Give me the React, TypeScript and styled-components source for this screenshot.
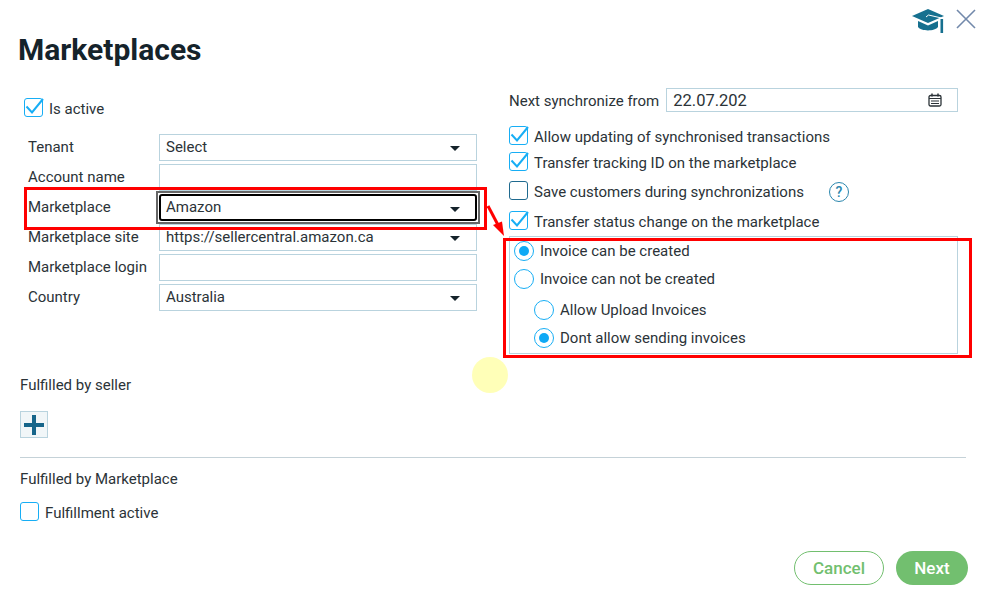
import React from "react";
import styled, { createGlobalStyle } from "styled-components";

const GlobalStyle = createGlobalStyle`
    html, body {
        margin: 0;
        padding: 0;
        background: #ffffff;
    }
    * {
        box-sizing: border-box;
    }
`

const formRows = [
    { label: "Tenant", value: "Select", select: true },
    { label: "Account name", value: "", select: false },
    { label: "Marketplace", value: "Amazon", select: true, focused: true },
    { label: "Marketplace site", value: "https://sellercentral.amazon.ca", select: true },
    { label: "Marketplace login", value: "", select: false },
    { label: "Country", value: "Australia", select: true },
]

const syncOptions = [
    { label: "Allow updating of synchronised transactions", checked: true, height: 26 },
    { label: "Transfer tracking ID on the marketplace", checked: true, height: 29 },
    { label: "Save customers during synchronizations", checked: false, height: 30, help: true },
    { label: "Transfer status change on the marketplace", checked: true, height: 25 },
]

const Tick: React.FC = () => (
    <TickIcon width="22" height="20" viewBox="0 0 22 20">
        <path d="M3.5 9.5 L9 15.5 L20 2" fill="none" stroke="#17aef5" strokeWidth="2" />
    </TickIcon>
)

export default function App() {
    return (
        <Page>
            <GlobalStyle />
            <TopBar>
                <svg width="33" height="25" viewBox="0 0 33 25">
                    <path d="M16 0 L32 7 L16 14 L0 7 Z" fill="#16708f" />
                    <path d="M6 12 L16 16.5 L26 12 V18 C23 22.5 9 22.5 6 18 Z" fill="#16708f" />
                    <path d="M14 8 L16.5 6 L29.5 9 V15" fill="none" stroke="#ffffff" strokeWidth="1" />
                    <rect x="28.5" y="10" width="2.6" height="14" fill="#16708f" />
                </svg>
                <svg width="20" height="20" viewBox="0 0 20 20">
                    <path d="M1 1 L19 19 M19 1 L1 19" stroke="#7289ab" strokeWidth="1.6" fill="none" />
                </svg>
            </TopBar>
            <Title>Marketplaces</Title>
            <Columns>
                <LeftColumn>
                    <ActiveRow>
                        <CheckBox $checked><Tick /></CheckBox>
                        <Text>Is active</Text>
                    </ActiveRow>
                    <FormRows>
                        {formRows.map((row) => (
                            <FormRow key={row.label}>
                                <FieldLabel>{row.label}</FieldLabel>
                                <Field $focused={row.focused}>
                                    {row.value}
                                    {row.select && <Caret />}
                                </Field>
                            </FormRow>
                        ))}
                    </FormRows>
                </LeftColumn>
                <RightColumn>
                    <DateRow>
                        <Text>Next synchronize from</Text>
                        <DateField>
                            22.07.202
                            <svg width="14" height="14" viewBox="0 0 14 14">
                                <rect x="1" y="2.5" width="12" height="10.5" rx="1.5" fill="none" stroke="#2b3338" strokeWidth="1.3" />
                                <path d="M1 5.5 H13 M3 8 H11 M3 10.5 H11" stroke="#2b3338" strokeWidth="1.2" />
                                <path d="M4 0.5 V3.5 M10 0.5 V3.5" stroke="#2b3338" strokeWidth="1.5" />
                            </svg>
                        </DateField>
                    </DateRow>
                    <SyncOptions>
                        {syncOptions.map((option) => (
                            <SyncRow key={option.label} $height={option.height}>
                                <CheckBox $checked={option.checked} $dark={!option.checked}>
                                    {option.checked && <Tick />}
                                </CheckBox>
                                <Text>{option.label}</Text>
                                {option.help && <HelpBadge>?</HelpBadge>}
                            </SyncRow>
                        ))}
                    </SyncOptions>
                    <InvoiceBox>
                        <RadioRow>
                            <Radio $checked />
                            <Text>Invoice can be created</Text>
                        </RadioRow>
                        <RadioRow>
                            <Radio />
                            <Text>Invoice can not be created</Text>
                        </RadioRow>
                        <NestedRadios>
                            <RadioRow>
                                <Radio />
                                <Text>Allow Upload Invoices</Text>
                            </RadioRow>
                            <RadioRow>
                                <Radio $checked />
                                <Text>Dont allow sending invoices</Text>
                            </RadioRow>
                        </NestedRadios>
                    </InvoiceBox>
                </RightColumn>
            </Columns>
            <SellerSection>
                <Text>Fulfilled by seller</Text>
                <AddButton>
                    <svg width="20" height="20" viewBox="0 0 20 20">
                        <path d="M10 0 V20 M0 10 H20" stroke="#16658a" strokeWidth="4" />
                    </svg>
                </AddButton>
            </SellerSection>
            <Divider />
            <MarketplaceSection>
                <Text>Fulfilled by Marketplace</Text>
                <FulfillmentRow>
                    <CheckBox />
                    <Text>Fulfillment active</Text>
                </FulfillmentRow>
            </MarketplaceSection>
            <Footer>
                <CancelButton>Cancel</CancelButton>
                <NextButton>Next</NextButton>
            </Footer>

            <FormHighlight />
            <InvoiceHighlight />
            <ArrowOverlay width="24" height="36" viewBox="0 0 24 36">
                <path d="M1 1 L10.5 19" stroke="#ff0000" strokeWidth="3" fill="none" />
                <path d="M6 20 L15 16.5 L17 31 Z" fill="#ff0000" />
            </ArrowOverlay>
            <CursorHalo />
        </Page>
    )
}

const Page = styled.div`
    position: relative;
    width: 984px;
    height: 599px;
    overflow: hidden;
    background: #ffffff;
    color: #2b3338;
    font-family: Roboto, "Liberation Sans", sans-serif;
    font-size: 15px;
`

const TopBar = styled.div`
    height: 33px;
    padding: 9px 8px 0 0;
    display: flex;
    justify-content: flex-end;
    align-items: flex-start;
    gap: 11px;
`

const Title = styled.h1`
    margin: 0;
    padding-left: 18px;
    height: 55px;
    line-height: 34px;
    font-size: 30px;
    font-weight: 700;
    color: #15232b;
`

const Columns = styled.div`
    display: flex;
    height: 266px;
    padding-left: 24px;
`

const LeftColumn = styled.div`
    width: 453px;
    margin-right: 32px;
    padding-top: 10px;
`

const RightColumn = styled.div`
    width: 449px;
`

const Text = styled.span`
    padding-top: 2px;
    line-height: 20px;
    white-space: nowrap;
`

const ActiveRow = styled.div`
    display: flex;
    align-items: center;
    gap: 6px;
    height: 19px;
`

const CheckBox = styled.span<{ $checked?: boolean; $dark?: boolean }>`
    position: relative;
    flex: none;
    width: 19px;
    height: 19px;
    border: 1px solid ${(p) => (p.$dark ? "#1f6a8f" : "#17aef5")};
    border-radius: 3px;
    background: #ffffff;
`

const TickIcon = styled.svg`
    position: absolute;
    left: -2px;
    top: -2px;
`

const FormRows = styled.div`
    display: flex;
    flex-direction: column;
    gap: 3px;
    margin-top: 17px;
`

const FormRow = styled.div`
    display: flex;
    align-items: center;
    height: 27px;
    padding-left: 4px;
`

const FieldLabel = styled.span`
    width: 131px;
    flex: none;
    padding-bottom: 2px;
    white-space: nowrap;
`

const Caret = styled.span`
    position: absolute;
    right: 16px;
    top: 11px;
    width: 0;
    height: 0;
    border-left: 5px solid transparent;
    border-right: 5px solid transparent;
    border-top: 5px solid #15232b;
`

const Field = styled.div<{ $focused?: boolean }>`
    position: relative;
    width: 318px;
    height: 27px;
    padding-left: 6px;
    line-height: 25px;
    border: 1px solid #b9d3de;
    background: #ffffff;
    white-space: nowrap;
    ${(p) => p.$focused && `
        z-index: 1;
        border: 2px solid #000000;
        border-radius: 3px;
        line-height: 23px;
        padding-left: 5px;
        & > span {
            right: 15px;
        }
        &::before {
            content: "";
            position: absolute;
            inset: -5px;
            border: 2px solid #666666;
        }
    `}
`

const DateRow = styled.div`
    display: flex;
    align-items: center;
    gap: 7px;
    height: 24px;
`

const DateField = styled.div`
    flex: 1;
    height: 24px;
    padding: 0 15px 0 6px;
    display: flex;
    align-items: center;
    justify-content: space-between;
    border: 1px solid #b9d3de;
    font-size: 16.5px;
`

const SyncOptions = styled.div`
    margin-top: 14px;
    display: flex;
    flex-direction: column;
`

const SyncRow = styled.div<{ $height: number }>`
    display: flex;
    align-items: flex-start;
    gap: 6px;
    height: ${(p) => p.$height}px;
    ${Text} {
        padding-top: 1px;
    }
`

const HelpBadge = styled.span`
    width: 20px;
    height: 20px;
    margin: 1px 0 0 19px;
    border: 1px solid #2a86ad;
    border-radius: 50%;
    color: #2a86ad;
    font-size: 14px;
    font-weight: 500;
    line-height: 18px;
    text-align: center;
`

const InvoiceBox = styled.div`
    height: 118px;
    padding: 0 4px;
    border: 1px solid #b9d3de;
`

const RadioRow = styled.div`
    display: flex;
    align-items: center;
    gap: 6px;
    height: 28px;
    ${Text} {
        padding-top: 0;
    }
`

const Radio = styled.span<{ $checked?: boolean }>`
    flex: none;
    width: 20px;
    height: 20px;
    border: 1px solid #17aef5;
    border-radius: 50%;
    display: flex;
    align-items: center;
    justify-content: center;
    &::after {
        content: "";
        display: ${(p) => (p.$checked ? "block" : "none")};
        width: 10px;
        height: 10px;
        border-radius: 50%;
        background: #0fa9f5;
    }
`

const NestedRadios = styled.div`
    margin-top: 3px;
    padding-left: 20px;
`

const SellerSection = styled.div`
    padding: 19px 0 0 20px;
    height: 103px;
    display: flex;
    flex-direction: column;
    align-items: flex-start;
`

const AddButton = styled.div`
    width: 28px;
    height: 27px;
    margin-top: 16px;
    display: flex;
    align-items: center;
    justify-content: center;
    background: #f1f6f8;
    border: 1px solid #b9d3de;
`

const Divider = styled.hr`
    margin: 0 18px 0 20px;
    height: 1px;
    border: none;
    background: #c5d2d8;
`

const MarketplaceSection = styled.div`
    padding: 11px 0 0 20px;
    height: 93px;
`

const FulfillmentRow = styled.div`
    margin-top: 11px;
    display: flex;
    align-items: center;
    gap: 6px;
    ${Text} {
        padding-top: 3px;
    }
`

const Footer = styled.div`
    display: flex;
    justify-content: flex-end;
    gap: 12px;
    padding-right: 16px;
`

const CancelButton = styled.div`
    width: 90px;
    height: 34px;
    border: 1px solid #72bf6f;
    border-radius: 17px;
    color: #72bf6f;
    font-size: 17px;
    font-weight: 500;
    line-height: 32px;
    text-align: center;
`

const NextButton = styled.div`
    width: 72px;
    height: 34px;
    border-radius: 17px;
    background: #72bf6f;
    color: #ffffff;
    font-size: 17px;
    font-weight: 500;
    line-height: 34px;
    text-align: center;
`

const FormHighlight = styled.div`
    position: absolute;
    z-index: 2;
    left: 24px;
    top: 187px;
    width: 463px;
    height: 43px;
    border: 3px solid #ff0000;
`

const InvoiceHighlight = styled.div`
    position: absolute;
    z-index: 2;
    left: 503px;
    top: 238px;
    width: 469px;
    height: 120px;
    border: 3px solid #ff0000;
`

const ArrowOverlay = styled.svg`
    position: absolute;
    z-index: 2;
    left: 487px;
    top: 205px;
`

const CursorHalo = styled.div`
    position: absolute;
    z-index: 3;
    left: 472px;
    top: 357px;
    width: 36px;
    height: 36px;
    border-radius: 50%;
    background: #ffffb8;
`
